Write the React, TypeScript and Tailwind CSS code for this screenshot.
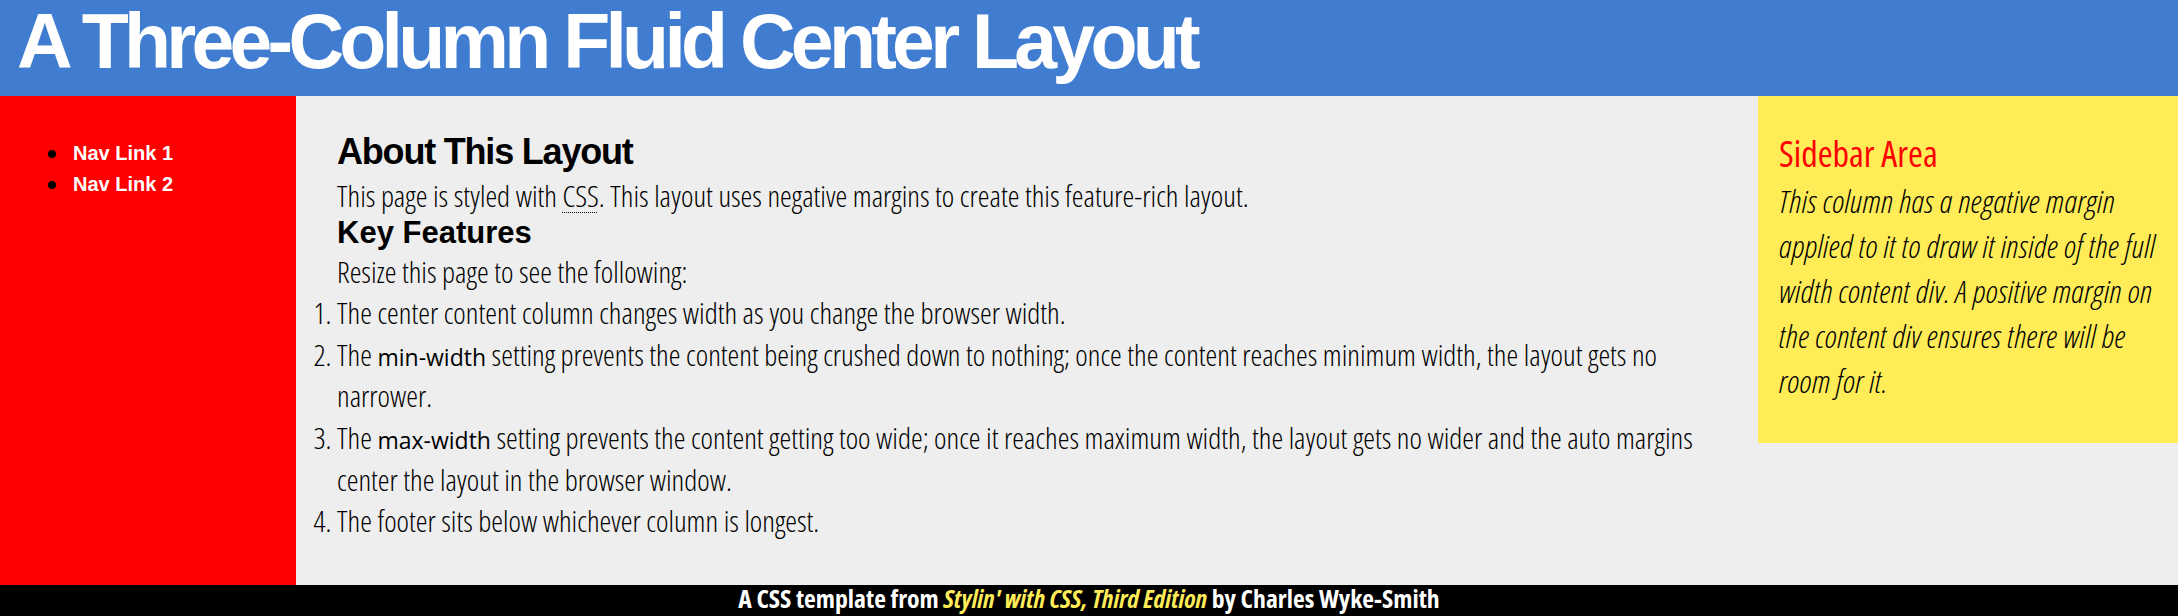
export default function App() {
  const cond = "font-['Open_Sans',sans-serif] [font-stretch:75%]";
  return (
    <div className="w-full min-h-[616px] flex flex-col bg-[#eeeeee] text-black">
      <header className="h-[96px] bg-[#407dd0] pl-[17px] pt-[3px]">
        <h1 className="font-['Liberation_Sans',Arial,sans-serif] font-bold text-[77px] leading-[77px] tracking-[-4.75px] text-white whitespace-nowrap">
          A Three-Column Fluid Center Layout
        </h1>
      </header>

      <div className="flex min-h-[489px]">
        <nav className="w-[296px] shrink-0 bg-[#ff0000] pt-[42px]">
          <ul className="pl-[48px] font-['Liberation_Sans',Arial,sans-serif] font-bold text-[20px] leading-[31px]">
            <li className="flex items-center">
              <span className="w-[8px] h-[8px] rounded-full bg-black mr-[17px]"></span>
              <a className="text-white">Nav Link 1</a>
            </li>
            <li className="flex items-center">
              <span className="w-[8px] h-[8px] rounded-full bg-black mr-[17px]"></span>
              <a className="text-white">Nav Link 2</a>
            </li>
          </ul>
        </nav>

        <main className="flex-1 min-w-0 pl-[41px] pr-[20px] pt-[36px]">
          <h2 className="font-['Liberation_Sans',Arial,sans-serif] font-bold text-[36px] leading-[40px] tracking-[-1.2px]">
            About This Layout
          </h2>
          <p className={`${cond} font-light text-[29.7px] leading-[41.6px] mt-[3px]`}>
            This page is styled with{" "}
            <abbr className="no-underline underline decoration-dotted decoration-1 underline-offset-[5px]">CSS</abbr>. This layout uses negative margins to create this feature-rich layout.
          </p>
          <h3 className="font-['Liberation_Sans',Arial,sans-serif] font-bold text-[31px] leading-[32px]">
            Key Features
          </h3>
          <p className={`${cond} font-light text-[29.7px] leading-[41.6px] mt-[2px]`}>
            Resize this page to see the following:
          </p>
          <ol className={`${cond} font-light text-[29.7px] leading-[41.6px] list-decimal list-outside`}>
            <li>The center content column changes width as you change the browser width.</li>
            <li>
              The{" "}
              <code className="font-['Open_Sans',sans-serif] [font-stretch:100%] font-normal text-[23px] leading-none">min-width</code>{" "}
              setting prevents the content being crushed down to nothing; once the content reaches minimum width, the layout gets no narrower.
            </li>
            <li>
              The{" "}
              <code className="font-['Open_Sans',sans-serif] [font-stretch:100%] font-normal text-[23px] leading-none">max-width</code>{" "}
              setting prevents the content getting too wide; once it reaches maximum width, the layout gets no wider and the auto margins center the layout in the browser window.
            </li>
            <li>The footer sits below whichever column is longest.</li>
          </ol>
        </main>

        <aside className="w-[420px] shrink-0 self-start bg-[#ffec57] pl-[21px] pr-[15px] pt-[36px] pb-[40px]">
          <h3 className={`${cond} font-normal text-[36px] leading-[44px] text-[#ff0000]`}>
            Sidebar Area
          </h3>
          <p className={`${cond} font-light italic text-[32px] tracking-[0.3px] leading-[45px] mt-[2px]`}>
            This column has a negative margin applied to it to draw it inside of the full width content div. A positive margin on the content div ensures there will be room for it.
          </p>
        </aside>
      </div>

      <footer className={`h-[31px] bg-black text-center ${cond} font-bold text-[25.7px] leading-[27px] text-white`}>
        A CSS template from <em className="text-[#ffec57]">Stylin' with CSS, Third Edition</em> by Charles Wyke-Smith
      </footer>
    </div>
  );
}
